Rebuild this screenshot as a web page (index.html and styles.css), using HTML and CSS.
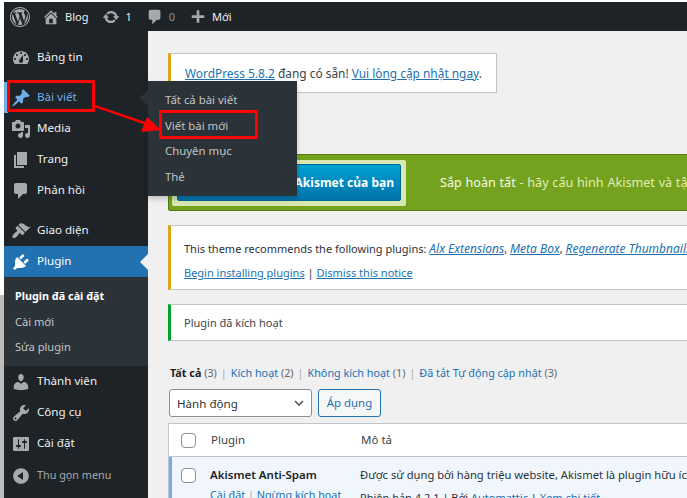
FILE: index.html
```html
<!DOCTYPE html>
<html lang="vi">
<head>
    <meta charset="UTF-8">
    <meta name="viewport" content="width=device-width, initial-scale=1.0">
    <title>Plugin</title>
    <link rel="stylesheet" href="styles.css">
</head>
<body>
    <svg class="sprite" width="0" height="0">
        <symbol id="i-wp" viewBox="0 0 20 20"><path d="M20 10c0-5.52-4.48-10-10-10S0 4.48 0 10s4.48 10 10 10 10-4.48 10-10zM10 1.01c4.97 0 8.99 4.02 8.99 8.99s-4.02 8.99-8.99 8.99S1.01 14.97 1.01 10 5.03 1.01 10 1.01zM8.01 14.82L4.96 6.61c.49-.03 1.05-.08 1.05-.08.43-.05.38-1.01-.06-.99 0 0-1.29.1-2.13.1-.15 0-.33 0-.52-.01 1.44-2.17 3.9-3.6 6.7-3.6 2.09 0 3.99.79 5.41 2.09-.6-.08-1.45.35-1.45 1.42 0 .66.38 1.22.79 1.88.31.54.5 1.22.5 2.21 0 1.34-1.27 4.48-1.27 4.48l-2.71-7.5c.48-.03.75-.16.75-.16.43-.05.38-1.1-.05-1.08 0 0-1.3.11-2.14.11-.78 0-2.11-.11-2.11-.11-.43-.02-.48 1.06-.05 1.08l.84.08 1.12 3.04zm6.02 2.15L16.64 10s.67-1.69.39-3.81c.63 1.14.94 2.42.94 3.81 0 2.96-1.56 5.58-3.94 7.01zM2.68 6.77L6.5 17.25c-2.67-1.3-4.47-4.08-4.47-7.25 0-1.16.2-2.23.65-3.23zm7.45 4.53l2.29 6.25c-.75.27-1.57.42-2.42.42-.72 0-1.41-.11-2.06-.3z"/></symbol>
        <symbol id="i-home" viewBox="0 0 20 20"><path d="M16 8.5l1.53 1.53-1.06 1.06L10 4.62l-6.47 6.47-1.06-1.06L10 2.5l4 4v-2h2v4zm-6-2.46l6 5.99V18H4v-5.97zM12 17v-5H8v5h4z"/></symbol>
        <symbol id="i-update" viewBox="0 0 20 20"><path d="M10.2 3.28c3.53 0 6.43 2.61 6.92 6h2.08l-3.5 4-3.5-4h2.32c-.45-1.97-2.21-3.45-4.32-3.45-1.45 0-2.73.71-3.54 1.78L4.95 5.66C6.23 4.2 8.11 3.28 10.2 3.28zm-.4 13.44c-3.52 0-6.43-2.61-6.92-6H.8l3.5-4c1.17 1.33 2.33 2.67 3.5 4H5.48c.45 1.97 2.21 3.45 4.32 3.45 1.45 0 2.73-.71 3.54-1.78l1.71 1.95c-1.28 1.46-3.15 2.38-5.25 2.38z"/></symbol>
        <symbol id="i-comment" viewBox="0 0 20 20"><path d="M5 2h9c1.1 0 2 .9 2 2v7c0 1.1-.9 2-2 2h-2l-5 5v-5H5c-1.1 0-2-.9-2-2V4c0-1.1.9-2 2-2z"/></symbol>
        <symbol id="i-plus" viewBox="0 0 20 20"><path d="M17 8v3h-5.5v5.5h-3V11H3V8h5.5V2.5h3V8z"/></symbol>
        <symbol id="i-dashboard" viewBox="0 0 20 20"><path d="M3.76 16h12.48c1.1-1.37 1.76-3.11 1.76-5 0-4.42-3.58-8-8-8s-8 3.58-8 8c0 1.89.66 3.63 1.76 5zM10 4c.55 0 1 .45 1 1s-.45 1-1 1-1-.45-1-1 .45-1 1-1zM6 6c.55 0 1 .45 1 1s-.45 1-1 1-1-.45-1-1 .45-1 1-1zm8 0c.55 0 1 .45 1 1s-.45 1-1 1-1-.45-1-1 .45-1 1-1zm-5.37 5.55L12 7v6c0 1.1-.9 2-2 2s-2-.9-2-2c0-.57.24-1.08.63-1.45zM4 10c.55 0 1 .45 1 1s-.45 1-1 1-1-.45-1-1 .45-1 1-1zm12 0c.55 0 1 .45 1 1s-.45 1-1 1-1-.45-1-1 .45-1 1-1z"/></symbol>
        <symbol id="i-post" viewBox="0 0 20 20"><path d="M10.44 3.02l1.82-1.82 6.36 6.35-1.83 1.82c-1.05-.68-2.48-.57-3.41.36l-.75.75c-.92.93-1.04 2.35-.35 3.41l-1.83 1.82-2.41-2.41-2.8 2.79c-.42.42-3.38 2.71-3.8 2.29s1.86-3.39 2.28-3.81l2.79-2.79L4.1 9.36l1.83-1.82c1.05.69 2.48.57 3.4-.36l.75-.75c.93-.92 1.05-2.35.36-3.41z"/></symbol>
        <symbol id="i-media" viewBox="0 0 20 20"><path d="M13 11V4c0-.55-.45-1-1-1h-1.67L9 1H5L3.67 3H2c-.55 0-1 .45-1 1v7c0 .55.45 1 1 1h10c.55 0 1-.45 1-1zM7 4.5c1.38 0 2.5 1.12 2.5 2.5S8.38 9.5 7 9.5 4.5 8.38 4.5 7 5.62 4.5 7 4.5zM14 6h5v10.5c0 1.38-1.12 2.5-2.5 2.5S14 17.88 14 16.5s1.12-2.5 2.5-2.5c.17 0 .34.02.5.05V9h-3V6zm-4 8.05V13h2v3.5c0 1.38-1.12 2.5-2.5 2.5S7 17.88 7 16.5 8.12 14 9.5 14c.17 0 .34.02.5.05z"/></symbol>
        <symbol id="i-page" viewBox="0 0 20 20"><path d="M6 15V2h10v13H6zm-1 1h8v2H3V5h2v11z"/></symbol>
        <symbol id="i-appearance" viewBox="0 0 20 20"><path d="M14.48 11.06L7.41 3.99l1.5-1.5c.5-.56 2.3-.47 3.51.32 1.21.8 1.43 1.28 2.91 2.1 1.18.64 2.45 1.26 4.45.85zm-.71.71L6.7 4.7 4.93 6.47c-.39.39-.39 1.02 0 1.41l1.06 1.06c.39.39.39 1.03 0 1.42-.6.6-1.43 1.11-2.21 1.69-.35.26-.7.53-1.01.84-1.34 1.34-1.8 3.14-1.01 3.93.79.79 2.59.33 3.93-1.01.31-.31.58-.66.84-1.01.58-.78 1.09-1.61 1.69-2.21.39-.39 1.03-.39 1.42 0l1.06 1.06c.39.39 1.02.39 1.41 0z"/></symbol>
        <symbol id="i-plugin" viewBox="0 0 20 20"><path d="M13.11 4.36L9.87 7.6 8 5.73l3.24-3.24c.35-.34 1.05-.2 1.56.32.52.51.66 1.21.31 1.55zm-8 1.77l.91-1.12 9.01 9.01-1.19.84c-.71.71-2.63 1.16-3.82 1.16H6.14L4.9 17.26c-.59.59-1.54.59-2.12 0-.59-.58-.59-1.53 0-2.12l1.24-1.24v-3.88c0-1.13.4-3.19 1.09-3.89zm7.26 3.97l3.24-3.24c.34-.35 1.04-.21 1.55.31.52.51.66 1.21.31 1.55l-3.24 3.25z"/></symbol>
        <symbol id="i-users" viewBox="0 0 20 20"><path d="M10 9.25c-2.27 0-2.73-3.44-2.73-3.44C7 4.02 7.82 2 9.97 2c2.16 0 2.98 2.02 2.71 3.81 0 0-.41 3.44-2.68 3.44zm0 2.57L12.72 10c2.39 0 4.52 2.33 4.52 4.53v2.49s-3.65 1.13-7.24 1.13c-3.65 0-7.24-1.13-7.24-1.13v-2.49c0-2.25 1.94-4.48 4.47-4.48z"/></symbol>
        <symbol id="i-tools" viewBox="0 0 20 20"><path d="M16.68 9.77c-1.34 1.34-3.3 1.67-4.95.99l-5.41 6.52c-.99.99-2.59.99-3.58 0s-.99-2.59 0-3.57l6.52-5.42c-.68-1.65-.35-3.61.99-4.95 1.28-1.28 3.12-1.62 4.72-1.06l-2.89 2.89 2.82 2.82 2.86-2.87c.53 1.58.18 3.39-1.08 4.65zM3.81 16.21c.4.39 1.04.39 1.43 0 .4-.4.4-1.04 0-1.43-.39-.4-1.03-.4-1.43 0-.39.39-.39 1.03 0 1.43z"/></symbol>
        <symbol id="i-settings" viewBox="0 0 20 20"><path d="M18 16V4c0-.55-.45-1-1-1H3c-.55 0-1 .45-1 1v12c0 .55.45 1 1 1h14c.55 0 1-.45 1-1zM8 11h1c.55 0 1 .45 1 1s-.45 1-1 1H8v1.5c0 .28-.22.5-.5.5s-.5-.22-.5-.5V13H6c-.55 0-1-.45-1-1s.45-1 1-1h1V5.5c0-.28.22-.5.5-.5s.5.22.5.5V11zm5-2h-1c-.55 0-1-.45-1-1s.45-1 1-1h1V5.5c0-.28.22-.5.5-.5s.5.22.5.5V7h1c.55 0 1 .45 1 1s-.45 1-1 1h-1v5.5c0 .28-.22.5-.5.5s-.5-.22-.5-.5V9z"/></symbol>
        <symbol id="i-collapse" viewBox="0 0 20 20"><path d="M10 2.16c4.33 0 7.84 3.51 7.84 7.84s-3.51 7.84-7.84 7.84S2.16 14.33 2.16 10 5.71 2.16 10 2.16zm2 11.72V6.12L6.18 9.97z"/></symbol>
    </svg>

    <div class="screen">
        <header class="adminbar">
            <svg class="bar-logo"><use href="#i-wp"/></svg>
            <span class="bar-item"><svg class="bar-icon"><use href="#i-home"/></svg><span class="bar-white">Blog</span></span>
            <span class="bar-item"><svg class="bar-icon"><use href="#i-update"/></svg><span class="bar-white">1</span></span>
            <span class="bar-item"><svg class="bar-icon"><use href="#i-comment"/></svg><span class="bar-dim">0</span></span>
            <span class="bar-item"><svg class="bar-icon"><use href="#i-plus"/></svg><span class="bar-white">Mới</span></span>
        </header>

        <div class="wrap">
            <nav class="sidebar">
                <a class="menu-item"><svg class="menu-icon"><use href="#i-dashboard"/></svg><span class="menu-label">Bảng tin</span></a>
                <div class="menu-sep"></div>
                <a class="menu-item is-hover"><svg class="menu-icon"><use href="#i-post"/></svg><span class="menu-label">Bài viết</span></a>
                <a class="menu-item"><svg class="menu-icon"><use href="#i-media"/></svg><span class="menu-label">Media</span></a>
                <a class="menu-item"><svg class="menu-icon"><use href="#i-page"/></svg><span class="menu-label">Trang</span></a>
                <a class="menu-item"><svg class="menu-icon"><use href="#i-comment"/></svg><span class="menu-label">Phản hồi</span></a>
                <div class="menu-sep"></div>
                <a class="menu-item"><svg class="menu-icon"><use href="#i-appearance"/></svg><span class="menu-label">Giao diện</span></a>
                <a class="menu-item is-current"><svg class="menu-icon"><use href="#i-plugin"/></svg><span class="menu-label">Plugin</span></a>
                <div class="submenu">
                    <a class="submenu-item is-current">Plugin đã cài đặt</a>
                    <a class="submenu-item">Cài mới</a>
                    <a class="submenu-item">Sửa plugin</a>
                </div>
                <a class="menu-item"><svg class="menu-icon"><use href="#i-users"/></svg><span class="menu-label">Thành viên</span></a>
                <a class="menu-item"><svg class="menu-icon"><use href="#i-tools"/></svg><span class="menu-label">Công cụ</span></a>
                <a class="menu-item"><svg class="menu-icon"><use href="#i-settings"/></svg><span class="menu-label">Cài đặt</span></a>
                <a class="menu-item is-collapse"><svg class="menu-icon"><use href="#i-collapse"/></svg><span class="menu-label">Thu gọn menu</span></a>
            </nav>

            <main class="content">
                <div class="notice notice-update">
                    <p><a>WordPress 5.8.2</a> đang có sẵn! <a>Vui lòng cập nhật ngay</a>.</p>
                </div>

                <div class="akismet">
                    <div class="akismet-frame">
                        <div class="akismet-btn">Thiết lập tài khoản Akismet của bạn</div>
                    </div>
                    <div class="akismet-text"><span class="akismet-strong">Sắp hoàn tất</span> - hãy cấu hình Akismet và tận hưởng</div>
                </div>

                <div class="notice notice-warn">
                    <p>This theme recommends the following plugins: <a><em>Alx Extensions</em></a>, <a><em>Meta Box</em></a>, <a><em>Regenerate Thumbnails</em></a></p>
                    <p><a>Begin installing plugins</a> | <a>Dismiss this notice</a></p>
                </div>

                <div class="notice notice-ok">
                    <p>Plugin đã kích hoạt</p>
                </div>

                <ul class="subsubsub">
                    <li><b>Tất cả</b> <span>(3)</span></li>
                    <li class="sep">|</li>
                    <li><a>Kích hoạt</a> <span>(2)</span></li>
                    <li class="sep">|</li>
                    <li><a>Không kích hoạt</a> <span>(1)</span></li>
                    <li class="sep">|</li>
                    <li><a>Đã tắt Tự động cập nhật</a> <span>(3)</span></li>
                </ul>

                <div class="bulk">
                    <div class="select">Hành động
                        <svg class="chevron" viewBox="0 0 10 6"><path d="M1 1l4 4 4-4" fill="none" stroke="#50575e" stroke-width="1.6"/></svg>
                    </div>
                    <div class="apply">Áp dụng</div>
                </div>

                <div class="plugins">
                    <div class="plugins-head">
                        <span class="check"></span>
                        <span class="col-name">Plugin</span>
                        <span class="col-desc">Mô tả</span>
                    </div>
                    <div class="plugins-row">
                        <span class="check"></span>
                        <div class="col-name">
                            <strong>Akismet Anti-Spam</strong>
                            <div class="row-actions"><a>Cài đặt</a> | <a>Ngừng kích hoạt</a></div>
                        </div>
                        <div class="col-desc">
                            <div class="desc-line">Được sử dụng bởi hàng triệu website, Akismet là plugin hữu ích nhất</div>
                            <div class="desc-meta">Phiên bản 4.2.1 | Bởi <a>Automattic</a> | <a>Xem chi tiết</a></div>
                        </div>
                    </div>
                </div>
            </main>
        </div>

        <!-- flyout va chu thich do nam de len tren noi dung -->
        <div class="flyout">
            <a class="fly-item">Tất cả bài viết</a>
            <a class="fly-item">Viết bài mới</a>
            <a class="fly-item">Chuyên mục</a>
            <a class="fly-item">Thẻ</a>
        </div>
        <div class="mark mark-menu"></div>
        <div class="mark mark-new"></div>
        <svg class="mark-arrow" viewBox="0 0 70 30" width="70" height="30">
            <path d="M0 1l55 19" stroke="#f00" stroke-width="2.4" fill="none"/>
            <path d="M66 25L52 12l-6 15z" fill="#f00"/>
        </svg>
    </div>
</body>
</html>
```

FILE: styles.css
```css
* {
    box-sizing: border-box;
}

body {
    margin: 0;
    height: 498px;
    overflow: hidden;
    font-family: "Noto Sans", Arial, sans-serif;
    font-size: 12px;
    color: #3c434a;
    background-color: #fff;
}

.sprite {
    display: block;
    position: absolute;
}

.screen {
    position: relative;
    width: 687px;
    height: 498px;
    overflow: hidden;
    padding: 2px 0 0 4px;
    background: linear-gradient(#fff 295px, #bdbdbd 295px);
}

a {
    color: #2271b1;
    text-decoration: underline;
}

p {
    margin: 0;
}

/* admin bar */
.adminbar {
    height: 29px;
    display: flex;
    align-items: center;
    padding-left: 6px;
    background-color: #1d2327;
    color: #c3c4c7;
}

.bar-logo {
    width: 20px;
    height: 20px;
    margin-right: 12px;
    fill: #a7aaad;
}

.bar-item {
    display: flex;
    align-items: center;
    gap: 5px;
    margin-right: 14px;
    font-size: 11px;
}

.bar-icon {
    width: 18px;
    height: 18px;
    fill: #a7aaad;
}

.bar-white {
    color: #f0f0f1;
}

.bar-dim {
    color: #8c8f94;
}

.wrap {
    display: flex;
    height: 467px;
}

/* sidebar */
.sidebar {
    width: 144px;
    flex: none;
    padding-top: 11px;
    background-color: #1d2327;
}

.menu-item {
    height: 31px;
    display: flex;
    align-items: center;
    gap: 6px;
    padding-left: 7px;
    position: relative;
    font-size: 11.6px;
    color: #f0f0f1;
    text-decoration: none;
}

.menu-label {
    padding-bottom: 2px;
}

.menu-icon {
    width: 20px;
    height: 20px;
    flex: none;
    fill: #a7aaad;
}

.menu-sep {
    height: 9px;
}

.menu-item.is-hover {
    color: #72aee6;
    box-shadow: inset 4px 0 0 #72aee6;
}

.menu-item.is-hover .menu-icon {
    fill: #72aee6;
}

.menu-item.is-hover::after,
.menu-item.is-current::after {
    content: '';
    position: absolute;
    right: 0;
    top: 8px;
    border: 8px solid transparent;
    border-left: 0;
    border-right-color: #2c3338;
    z-index: 3;
}

.menu-item.is-current {
    background-color: #2271b1;
    color: #fff;
}

.menu-item.is-current .menu-icon {
    fill: #fff;
}

.menu-item.is-current::after {
    border-right-color: #f0f0f1;
}

.menu-item.is-collapse {
    margin-top: 1px;
    font-size: 10.8px;
    color: #a7aaad;
}

.submenu {
    height: 89px;
    padding-top: 6px;
    background-color: #2c3338;
}

.submenu-item {
    display: block;
    height: 25.5px;
    line-height: 25px;
    padding-left: 11px;
    font-size: 11.1px;
    color: #c3c4c7;
    text-decoration: none;
}

.submenu-item.is-current {
    color: #fff;
    font-size: 10.8px;
    font-weight: 700;
}

/* flyout */
.flyout {
    position: absolute;
    left: 148px;
    top: 81px;
    width: 149px;
    height: 115px;
    padding: 6px 0 0 17px;
    background-color: #2c3338;
    box-shadow: 0 3px 5px rgba(0, 0, 0, 0.2);
    z-index: 2;
}

.fly-item {
    display: block;
    height: 25.5px;
    line-height: 25px;
    font-size: 11.4px;
    color: #c3c4c7;
    text-decoration: none;
}

.mark {
    position: absolute;
    border: 3px solid #f00;
    z-index: 4;
}

.mark-menu {
    left: 7px;
    top: 80px;
    width: 88px;
    height: 32px;
}

.mark-new {
    left: 159px;
    top: 110px;
    width: 99px;
    height: 29px;
}

.mark-arrow {
    position: absolute;
    left: 95px;
    top: 105px;
    z-index: 4;
}

/* content */
.content {
    width: 539px;
    flex: none;
    overflow: hidden;
    padding: 22px 0 0 20px;
    background-color: #f0f0f1;
}

.notice {
    background-color: #fff;
    border: 1px solid #c3c4c7;
    border-left-width: 3px;
}

.notice-update {
    width: 329px;
    height: 40px;
    padding: 11px 0 0 14px;
    border-left-color: #dba617;
    font-size: 11.9px;
    white-space: nowrap;
}

.notice-warn {
    width: 560px;
    height: 65px;
    margin-top: 14px;
    padding: 14px 0 0 13px;
    border-left-color: #dba617;
    font-size: 11px;
    color: #2c3338;
    white-space: nowrap;
}

.notice-warn em {
    font-size: 12px;
}

.notice-warn p + p {
    margin-top: 8px;
}

.notice-ok {
    width: 560px;
    height: 37px;
    margin-top: 14px;
    padding: 10px 0 0 13px;
    border-left-color: #00a32a;
    font-size: 11px;
}

.akismet {
    width: 560px;
    height: 57px;
    margin-top: 61px;
    display: flex;
    align-items: center;
    gap: 34px;
    padding-left: 3px;
    background-color: #74a21e;
    border: 1px solid #4f800d;
    border-radius: 2px;
    white-space: nowrap;
}

.akismet-frame {
    width: 234px;
    height: 46px;
    flex: none;
    padding: 4px 5px;
    background-color: #d9e8b0;
    border-radius: 2px;
}

.akismet-btn {
    height: 37px;
    display: flex;
    align-items: center;
    justify-content: flex-end;
    overflow: hidden;
    padding-right: 6px;
    font-weight: 700;
    color: #fff;
    background: linear-gradient(#00a0d2, #0073aa);
    border: 1px solid #006799;
    border-radius: 2px;
}

.akismet-text {
    font-size: 12.6px;
    word-spacing: 0.5px;
    color: #e1eeb5;
}

.akismet-strong {
    color: #f5fbe4;
}

.subsubsub {
    display: flex;
    gap: 4px;
    margin: 24px 0 0 2px;
    padding: 0;
    list-style: none;
    font-size: 10.8px;
    line-height: 16px;
    color: #646970;
    white-space: nowrap;
}

.subsubsub a {
    text-decoration: none;
}

.subsubsub b {
    color: #1d2327;
}

.subsubsub .sep {
    color: #a7aaad;
}

.bulk {
    display: flex;
    gap: 6px;
    margin: 8px 0 0 1px;
}

.select {
    width: 143px;
    height: 28px;
    display: flex;
    align-items: center;
    justify-content: space-between;
    padding: 0 7px;
    background-color: #fff;
    border: 1px solid #8c8f94;
    border-radius: 3px;
    font-size: 11.6px;
    color: #2c3338;
}

.chevron {
    width: 10px;
    height: 6px;
}

.apply {
    width: 63px;
    height: 28px;
    line-height: 25px;
    text-align: center;
    font-size: 11.4px;
    color: #2271b1;
    background-color: #f6f7f7;
    border: 1px solid #2271b1;
    border-radius: 3px;
}

.plugins {
    width: 560px;
    margin-top: 6px;
    background-color: #fff;
    border: 1px solid #c3c4c7;
    border-bottom: 0;
    white-space: nowrap;
}

.plugins-head {
    height: 33px;
    display: flex;
    align-items: center;
    padding-left: 12px;
    font-size: 11.5px;
    line-height: 14px;
    border-bottom: 1px solid #c3c4c7;
}

.plugins-row {
    display: flex;
    height: 60px;
    padding: 11px 0 0 9px;
    background-color: #f0f6fc;
    border-left: 3px solid #72aee6;
}

.check {
    width: 15px;
    height: 15px;
    flex: none;
    background-color: #fff;
    border: 1px solid #8c8f94;
    border-radius: 4px;
}

.col-name {
    width: 150px;
    flex: none;
    margin-left: 15px;
}

.plugins-row .col-name {
    margin-left: 14px;
}

.col-name strong {
    display: block;
    font-size: 11.5px;
    font-weight: 600;
    color: #1d2327;
    line-height: 14px;
}

.row-actions {
    margin-top: 5px;
    font-size: 10.8px;
    color: #a7aaad;
}

.row-actions a,
.desc-meta a {
    text-decoration: none;
}

.desc-line {
    font-size: 11.2px;
    line-height: 14px;
    color: #2c3338;
}

.desc-meta {
    margin-top: 8px;
    font-size: 11px;
    color: #2c3338;
}
```
